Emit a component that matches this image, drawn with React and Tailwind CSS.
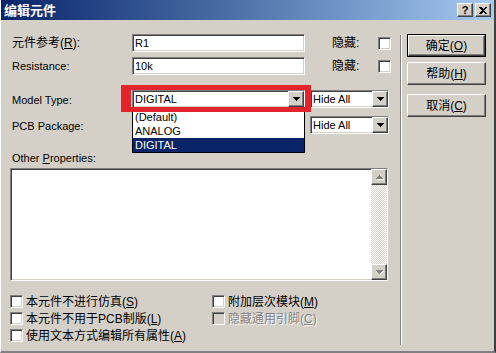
import React from 'react';

const ui = "font-['Liberation_Sans','Noto_Sans_CJK_SC',sans-serif]";
const sunken =
  'border border-t-[#808080] border-l-[#808080] border-r-white border-b-white shadow-[inset_1px_1px_0_#404040,inset_-1px_-1px_0_#d4d0c8]';
const raised =
  'border border-t-white border-l-white border-r-[#404040] border-b-[#404040] shadow-[inset_-1px_-1px_0_#808080]';

// small pixel arrow used by combos and scrollbar
const Arrow = ({ up, color = '#000' }) => (
  <svg width="7" height="4" viewBox="0 0 7 4" shapeRendering="crispEdges" className={up ? 'rotate-180' : ''}>
    <path d="M0 0h7v1h-1v1h-1v1h-1v1h-1v-1h-1v-1h-1v-1h-1z" fill={color} />
  </svg>
);

const Check = ({ disabled }) => (
  <span className={`block w-[13px] h-[13px] shrink-0 ${sunken} ${disabled ? 'bg-[#d4d0c8]' : 'bg-white'}`} />
);

const Combo = ({ value, className = '' }) => (
  <div className={`h-[18px] bg-white flex items-center ${sunken} ${className}`}>
    <span className="pl-[2px] text-[11px]">{value}</span>
    <div className={`ml-auto h-full w-[16px] bg-[#d4d0c8] flex items-center justify-center ${raised}`}>
      <Arrow />
    </div>
  </div>
);

const Key = ({ children }) => <span className="underline underline-offset-1">{children}</span>;

const Button = ({ children, isDefault }) => (
  <div className={`h-[23px] ${isDefault ? 'border border-black' : ''}`}>
    <div className={`h-full flex items-center justify-center text-[12px] bg-[#d4d0c8] ${raised}`}>{children}</div>
  </div>
);

const CheckRow = ({ children, disabled }) => (
  <div className="h-[17px] flex items-center gap-[3px]">
    <Check disabled={disabled} />
    <span className={`text-[12px] ${disabled ? 'text-[#808080] [text-shadow:1px_1px_0_#fff]' : ''}`}>{children}</span>
  </div>
);

export default function App() {
  return (
    <div
      className={`w-[496px] h-[353px] bg-[#d4d0c8] flex flex-col border-l border-l-white border-r-2 border-r-[#404040] border-b-2 border-b-[#808080] ${ui} text-[11px] text-black leading-none`}
    >
      {/* title bar */}
      <div className="h-[20px] shrink-0 flex items-center pl-[3px] pr-[3px] bg-gradient-to-r from-[#0a246a] to-[#a6caf0]">
        <span className="text-white font-bold text-[13px]">编辑元件</span>
        <div className="ml-auto flex gap-[2px]">
          <div className={`w-[16px] h-[14px] bg-[#d4d0c8] flex items-center justify-center font-bold text-[11px] ${raised}`}>?</div>
          <div className={`w-[16px] h-[14px] bg-[#d4d0c8] flex items-center justify-center ${raised}`}>
            <svg width="8" height="7" viewBox="0 0 8 7" shapeRendering="crispEdges">
              <path d="M0 0h2l2 2 2-2h2L5 3.5 8 7H6L4 5 2 7H0l3-3.5z" fill="#000" />
            </svg>
          </div>
        </div>
      </div>

      <div className="flex-1 flex pl-[9px] pt-[14px]">
        {/* left column */}
        <div className="w-[381px] flex flex-col">
          <div className="h-[18px] flex items-center">
            <span className="w-[122px] pl-[2px] text-[12px]">元件参考(<Key>R</Key>):</span>
            <div className={`w-[173px] h-[18px] bg-white flex items-center pl-[2px] ${sunken}`}>R1</div>
            <span className="ml-[27px] text-[12px]">隐藏:</span>
            <span className="ml-auto"><Check /></span>
          </div>
          <div className="h-[18px] mt-[5px] flex items-center">
            <span className="w-[122px] pl-[2px]">Resistance:</span>
            <div className={`w-[173px] h-[18px] bg-white flex items-center pl-[2px] ${sunken}`}>10k</div>
            <span className="ml-[27px] text-[12px]">隐藏:</span>
            <span className="ml-auto"><Check /></span>
          </div>

          <div className="h-[18px] mt-[15px] flex items-center">
            <span className="w-[122px] pl-[2px] pt-[3px]">Model Type:</span>
            <div className="relative w-[173px] z-10">
              <Combo value="DIGITAL" />
              <div className="absolute left-0 top-[19px] w-[173px] bg-white border border-black flex flex-col">
                <div className="h-[14px] flex items-center pl-[2px]">(Default)</div>
                <div className="h-[14px] flex items-center pl-[2px]">ANALOG</div>
                <div className="h-[14px] flex items-center pl-[2px] bg-[#0a246a] text-white">DIGITAL</div>
              </div>
              <div className="absolute left-[-11px] top-[-5px] w-[190px] h-[27px] border-[#e3242b] border-t-[5px] border-b-[5px] border-l-[10px] border-r-[6px]" />
            </div>
            <Combo value="Hide All" className="ml-[5px] w-[79px]" />
          </div>
          <div className="h-[18px] mt-[8px] flex items-center">
            <span className="w-[122px] pl-[2px] pt-[2px]">PCB Package:</span>
            <span className="w-[173px]" />
            <Combo value="Hide All" className="ml-[5px] w-[79px]" />
          </div>

          <div className="h-[12px] mt-[18px] pl-[2px] flex items-center">
            <span>Other <Key>P</Key>roperties:</span>
          </div>
          <div className={`mt-[4px] w-[378px] h-[113px] bg-white flex justify-end ${sunken}`}>
            <div className="w-[16px] h-full flex flex-col bg-[repeating-conic-gradient(#d4d0c8_0%_25%,#ffffff_0%_50%)] bg-[length:2px_2px]">
              <div className={`h-[16px] bg-[#d4d0c8] flex items-center justify-center ${raised}`}>
                <span className="[filter:drop-shadow(1px_1px_0_#fff)]"><Arrow up color="#808080" /></span>
              </div>
              <div className={`mt-auto h-[16px] bg-[#d4d0c8] flex items-center justify-center ${raised}`}>
                <span className="[filter:drop-shadow(1px_1px_0_#fff)]"><Arrow color="#808080" /></span>
              </div>
            </div>
          </div>

          <div className="mt-[12px] flex">
            <div className="w-[202px] flex flex-col">
              <CheckRow>本元件不进行仿真(<Key>S</Key>)</CheckRow>
              <CheckRow>本元件不用于PCB制版(<Key>L</Key>)</CheckRow>
              <CheckRow>使用文本方式编辑所有属性(<Key>A</Key>)</CheckRow>
            </div>
            <div className="flex flex-col">
              <CheckRow>附加层次模块(<Key>M</Key>)</CheckRow>
              <CheckRow disabled>隐藏通用引脚(<Key>C</Key>)</CheckRow>
            </div>
          </div>
        </div>

        {/* separator */}
        <div className="ml-[9px] mt-[1px] mb-[6px] w-[2px] border-l border-l-[#808080] border-r border-r-white" />

        {/* buttons */}
        <div className="ml-[5px] w-[79px] flex flex-col">
          <Button isDefault>确定(<Key>O</Key>)</Button>
          <div className="mt-[5px]"><Button>帮助(<Key>H</Key>)</Button></div>
          <div className="mt-[9px]"><Button>取消(<Key>C</Key>)</Button></div>
        </div>
      </div>
    </div>
  );
}
